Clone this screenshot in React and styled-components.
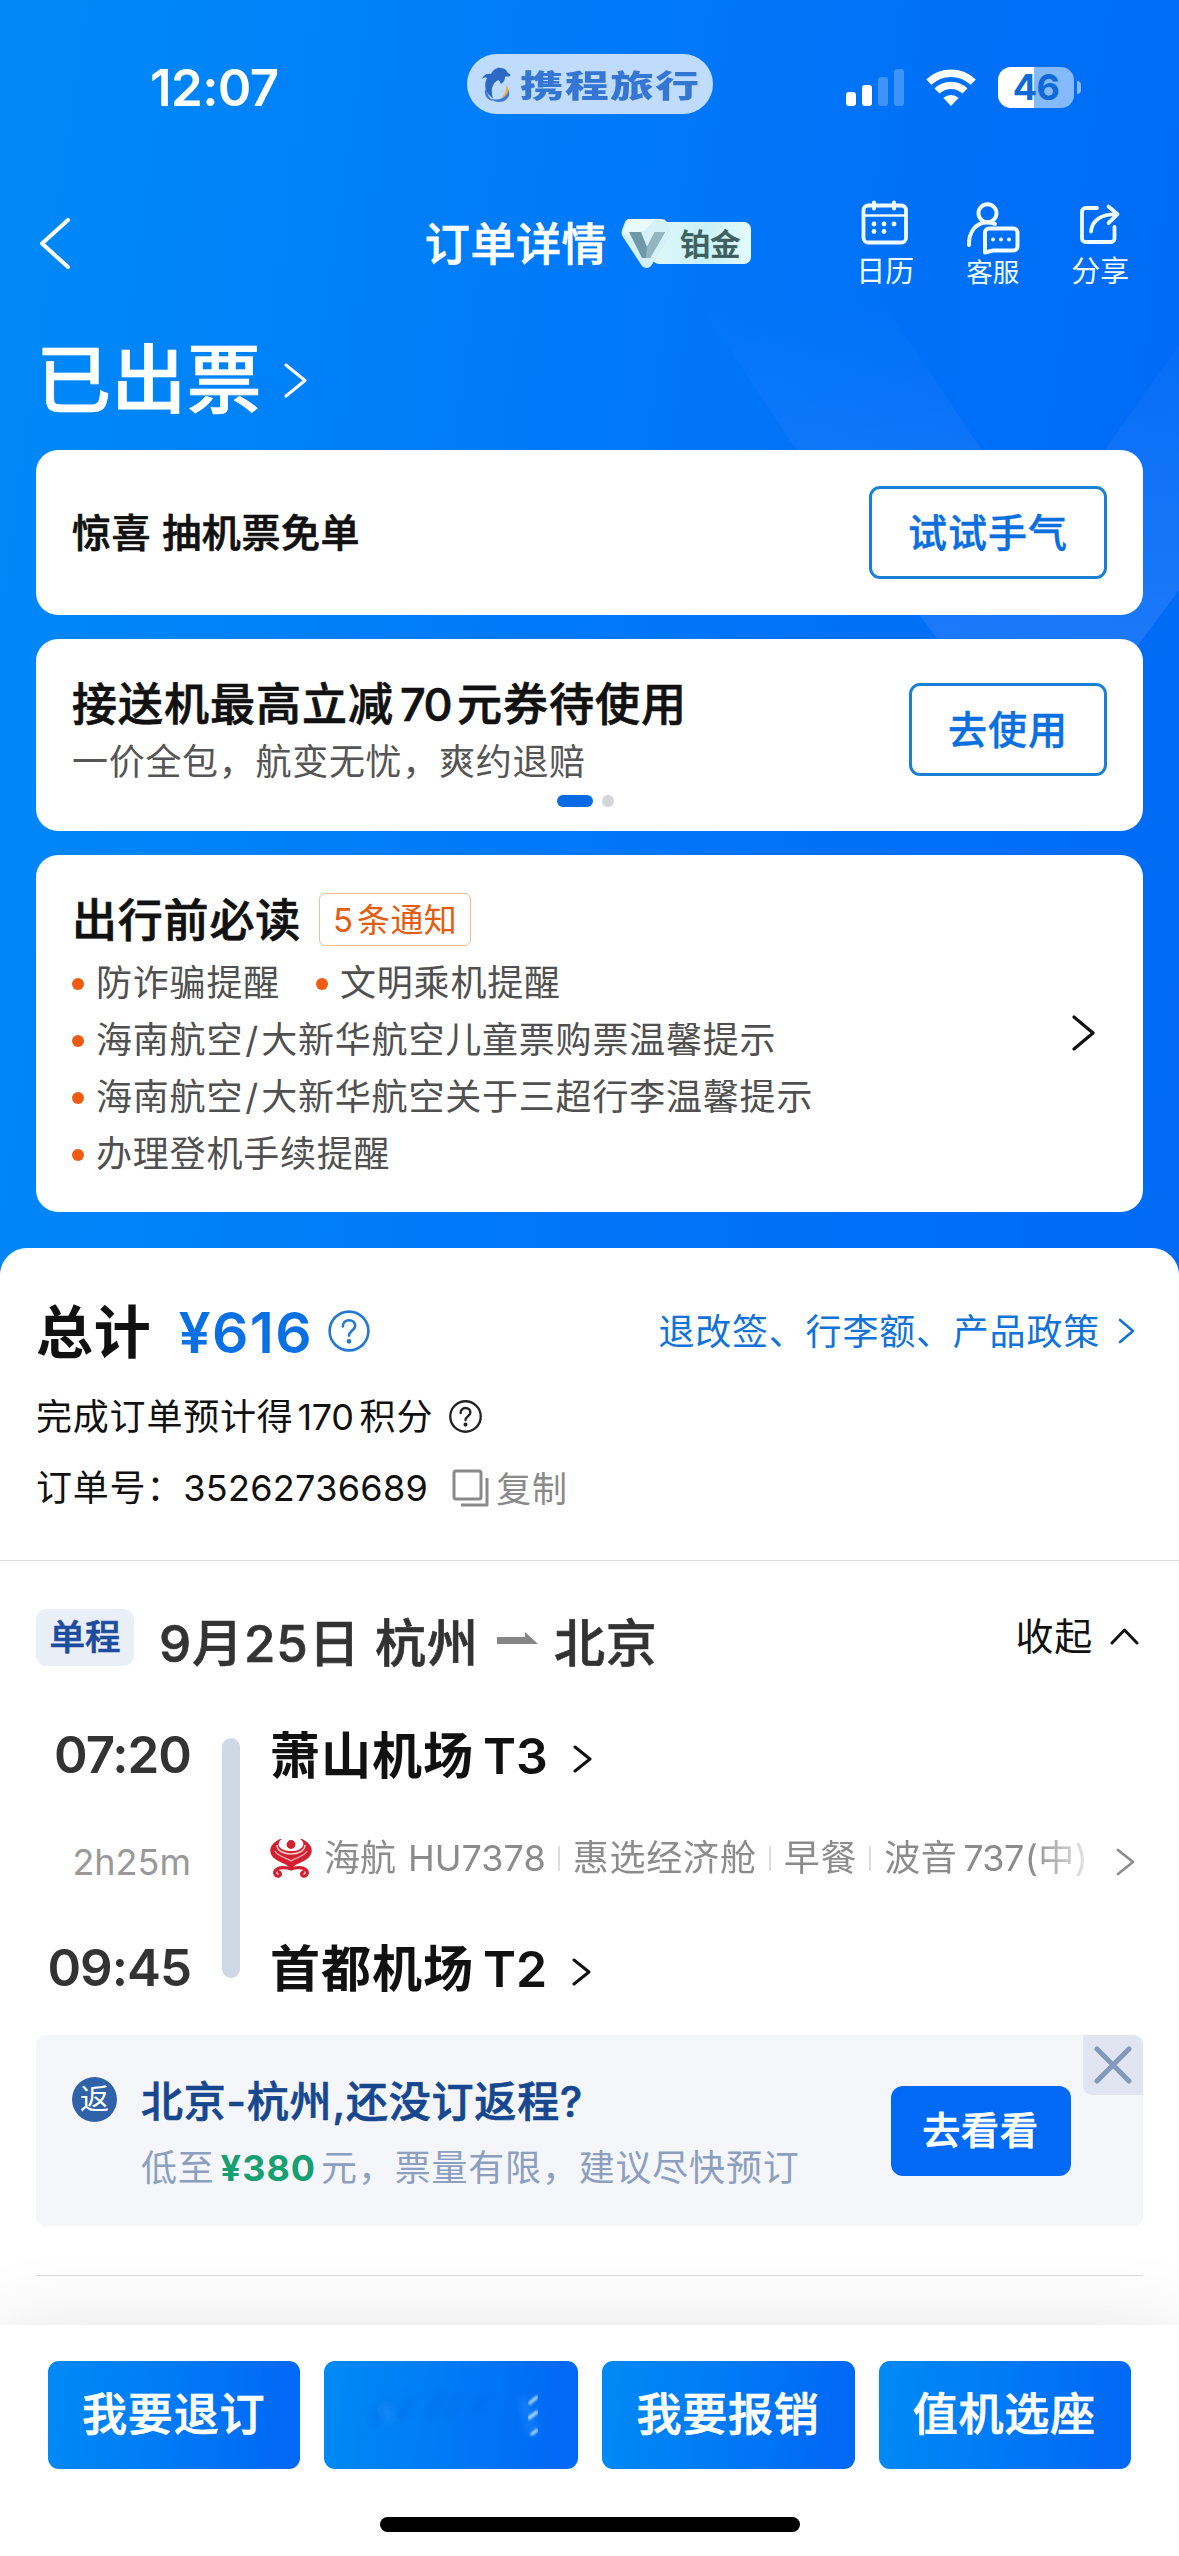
import React from "react";
import styled, { createGlobalStyle } from "styled-components";

const Global = createGlobalStyle`
  * { box-sizing: border-box; }
  html, body { margin: 0; padding: 0; background: #fff; }
  body { font-family: Inter, "Noto Sans CJK SC", sans-serif; -webkit-font-smoothing: antialiased; }
  svg { display: block; flex: none; }
`;

const Screen = styled.div`
  position: relative;
  width: 1179px;
  height: 2556px;
  display: flex;
  flex-direction: column;
  overflow: hidden;
  background: linear-gradient(98deg, #008af7 0%, #007bf8 42%, #006ff7 75%, #006af4 100%);
  background-size: 1179px 1300px;
`;

const Watermark = styled.svg`
  position: absolute;
  left: 679px;
  top: 280px;
`;

const Txt = styled.span`
  display: block;
  white-space: nowrap;
  padding-top: ${(p) => p.$drop || 0}px;
  font-size: ${(p) => p.$size || 36}px;
  line-height: ${(p) => p.$lh || 1.2};
  font-weight: ${(p) => p.$weight || 400};
  color: ${(p) => p.$color || "#111"};
  letter-spacing: ${(p) => (p.$track === undefined ? 0.8 : p.$track)}px;
  -webkit-text-stroke: ${(p) => (p.$weight === 500 ? "0.7px currentColor" : "0")};
`;

const Num = styled.span`
  margin: 0 ${(p) => (p.$r === undefined ? 6 : p.$r)}px 0 ${(p) => (p.$l === undefined ? 6 : p.$l)}px;
  letter-spacing: ${(p) => p.$track || 0}px;
  font-weight: ${(p) => p.$weight || "inherit"};
  color: ${(p) => p.$color || "inherit"};
`;

/* ---------- status bar ---------- */
const StatusBar = styled.header`
  position: relative;
  display: grid;
  grid-template-columns: 1fr auto 1fr;
  grid-template-rows: 60px;
  align-items: center;
  height: 114px;
  padding: 54px 98px 0 150px;
`;
const Clock = styled(Txt)`
  margin-top: 8px;
`;
const BrandPill = styled.div`
  display: flex;
  align-items: center;
  width: 246px;
  height: 60px;
  transform: translateX(-26px);
  padding-left: 14px;
  border-radius: 30px;
  background: #bfdcfc;
`;
const BrandName = styled.span`
  margin: 0 0 1px 7px;
  font: 900 31px/40px "Noto Sans CJK SC", sans-serif;
  letter-spacing: 1px;
  color: #3676d3;
  white-space: nowrap;
  transform: scaleX(1.41);
  transform-origin: left center;
`;
const StatusIcons = styled.div`
  display: flex;
  justify-content: flex-end;
  align-items: center;
  gap: 22px;
  margin-top: 7px;
`;
const Battery = styled.div`
  display: flex;
  align-items: center;
  gap: 3px;
`;
const BatteryBody = styled.div`
  display: flex;
  align-items: center;
  justify-content: center;
  width: 76px;
  height: 41px;
  border-radius: 13px;
  background: linear-gradient(90deg, #fff 0 36px, #84b9fb 36px);
  color: #0e6ad8;
  font-size: 36px;
  line-height: 41px;
  font-weight: 700;
  letter-spacing: -0.5px;
`;
const BatteryTip = styled.div`
  width: 4px;
  height: 13px;
  border-radius: 0 5px 5px 0;
  background: #84b9fb;
`;

/* ---------- navigation ---------- */
const NavBar = styled.nav`
  position: relative;
  display: grid;
  grid-template-columns: 1fr auto 1fr;
  align-items: center;
  height: 106px;
  margin-top: 76px;
  padding: 0 25px 0 40px;
`;
const NavTitle = styled.div`
  display: flex;
  align-items: center;
  transform: translateX(-9px);
`;
const Level = styled.div`
  display: flex;
  align-items: center;
  margin-left: 13px;
`;
const LevelLabel = styled.div`
  display: flex;
  align-items: center;
  justify-content: flex-end;
  width: 99px;
  height: 42px;
  margin-left: -20px;
  padding-right: 11px;
  border-radius: 7px;
  background: linear-gradient(90deg, #dff8fb, #c9f1f4 55%, #e4fcfb);
`;
const LevelShield = styled.svg`
  position: relative;
  z-index: 1;
`;
const Actions = styled.div`
  display: flex;
  justify-content: flex-end;
`;
const Action = styled.div`
  display: flex;
  flex-direction: column;
  align-items: center;
  width: 107.5px;
`;

/* ---------- hero ---------- */
const Hero = styled.div`
  position: relative;
  display: flex;
  align-items: center;
  height: 154px;
  padding: 14px 0 0 36px;
  gap: 22px;
`;
const Cards = styled.div`
  position: relative;
  display: flex;
  flex-direction: column;
  gap: 24px;
  padding: 0 36px 36px;
`;
const Card = styled.section`
  position: relative;
  display: flex;
  justify-content: space-between;
  align-items: center;
  height: ${(p) => p.$h}px;
  padding: 0 36px;
  border-radius: 22px;
  background: #fff;
`;
const OutlineButton = styled.button`
  width: ${(p) => p.$w}px;
  height: 93px;
  margin-bottom: ${(p) => p.$lift || 0}px;
  padding: 0;
  border: 3px solid #1b7fd6;
  border-radius: 11px;
  background: #fff;
  font: 500 39px/1 Inter, "Noto Sans CJK SC", sans-serif;
  letter-spacing: 1px;
  color: #0b6fdf;
  -webkit-text-stroke: 0.4px currentColor;
`;
const PromoText = styled.div`
  display: flex;
  flex-direction: column;
  align-self: flex-start;
  padding-top: 39px;
`;
const Pager = styled.div`
  position: absolute;
  left: 521px;
  bottom: 24px;
  display: flex;
  gap: 9px;
`;
const Dot = styled.i`
  width: ${(p) => (p.$on ? 36 : 12)}px;
  height: 12px;
  border-radius: 6px;
  background: ${(p) => (p.$on ? "#0a6ae4" : "#d3d5d8")};
`;
const Notices = styled.div`
  display: flex;
  flex-direction: column;
  align-self: flex-start;
  padding-top: 38px;
`;
const NoticeHead = styled.div`
  display: flex;
  align-items: center;
  gap: 18px;
  height: 53px;
  margin-bottom: 9px;
`;
const Tag = styled.div`
  display: flex;
  align-items: center;
  justify-content: center;
  width: 152px;
  height: 53px;
  border: 1.5px solid #f3bd92;
  border-radius: 6px;
`;
const NoticeRow = styled.div`
  display: flex;
  align-items: center;
  gap: 36px;
  height: 57px;
`;
const Notice = styled.div`
  display: flex;
  align-items: center;
  gap: 12px;
  &::before {
    content: "";
    width: 12px;
    height: 12px;
    border-radius: 50%;
    background: #ee5b12;
  }
`;
const CardChevron = styled.div`
  margin: -1px 12px 0 0;
`;

/* ---------- sheet ---------- */
const Sheet = styled.main`
  position: relative;
  flex: 1;
  border-radius: 27px 27px 0 0;
  background: #fff;
`;
const Summary = styled.section`
  height: 312px;
  padding: 53px 44px 0 36px;
`;
const SummaryRow = styled.div`
  display: flex;
  align-items: center;
  height: ${(p) => p.$h}px;
  margin-bottom: ${(p) => p.$mb || 0}px;
  gap: ${(p) => p.$gap || 0}px;
`;
const PolicyLink = styled.a`
  display: flex;
  align-items: center;
  gap: 18px;
  margin-left: auto;
`;
const Copy = styled.div`
  display: flex;
  align-items: center;
  gap: 6px;
`;
const Rule = styled.hr`
  height: 1px;
  margin: ${(p) => p.$m || 0};
  border: 0;
  background: #dcdde0;
`;
const Trip = styled.section`
  padding: 48px 36px 0;
`;
const TripHead = styled.div`
  display: flex;
  align-items: center;
  height: 57px;
`;
const TripTag = styled.div`
  display: flex;
  align-items: center;
  justify-content: center;
  width: 98px;
  height: 57px;
  border-radius: 11px;
  background: #eaeef7;
`;
const Route = styled.div`
  display: flex;
  align-items: center;
  margin: 13px 0 0 25px;
`;
const Arrow = styled.svg`
  margin: -11px 16px 0 18px;
`;
const Collapse = styled.div`
  display: flex;
  align-items: center;
  gap: 17px;
  margin: -2px 4px 0 auto;
`;
const Itinerary = styled.div`
  display: grid;
  grid-template-columns: 154px 18px 1fr;
  height: 265px;
  margin-top: 63px;
`;
const Column = styled.div`
  display: flex;
  flex-direction: column;
  justify-content: space-between;
  align-items: ${(p) => p.$align};
  padding-left: ${(p) => p.$pl || 0}px;
`;
const TimeLine = styled.div`
  width: 18px;
  height: 240px;
  margin: 9px 0 auto;
  border-radius: 9px;
  background: #ced8e6;
`;
const Place = styled.div`
  display: flex;
  align-items: center;
  height: 52px;
  gap: 25px;
  & > svg { margin-top: 8px; }
`;
const FlightRow = styled.div`
  display: flex;
  align-items: center;
  width: 873px;
  height: 48px;
  margin-bottom: 7px;
`;
const FlightInfo = styled.div`
  display: flex;
  align-items: center;
  width: 822px;
  -webkit-mask-image: linear-gradient(90deg, #000 760px, rgba(0, 0, 0, 0.2) 818px);
  mask-image: linear-gradient(90deg, #000 760px, rgba(0, 0, 0, 0.2) 818px);
`;
const Carrier = styled(Txt)`
  margin-left: 12px;
`;
const Sep = styled.i`
  width: 2px;
  height: 25px;
  margin: 0 13px 0 12px;
  background: #dcdde0;
`;
const RowChevron = styled.div`
  margin: 7px 0 0 24px;
`;
const TimeText = styled(Txt)`
  height: 52px;
  line-height: 52px;
  margin-right: -1px;
`;

/* ---------- return offer ---------- */
const Offer = styled.section`
  position: relative;
  display: flex;
  height: 191px;
  margin-top: 41px;
  padding: 0 72px 0 36px;
  border-radius: 9px;
  background: #f4f6fa;
`;
const Back = styled.div`
  display: flex;
  align-items: center;
  justify-content: center;
  width: 45px;
  height: 45px;
  margin-top: 42px;
  border-radius: 50%;
  background: #2f62a8;
`;
const OfferText = styled.div`
  display: flex;
  flex-direction: column;
  padding: 40px 0 0 24px;
`;
const SolidButton = styled.button`
  width: 180px;
  height: 90px;
  margin: 51px 0 0 auto;
  padding: 0 1px 2px 0;
  border: 0;
  border-radius: 12px;
  background: #006af6;
  color: #fff;
  font: 500 38px/1 Inter, "Noto Sans CJK SC", sans-serif;
  letter-spacing: 0.8px;
  -webkit-text-stroke: 0.7px currentColor;
`;
const Close = styled.div`
  position: absolute;
  right: 0;
  top: 0;
  display: flex;
  align-items: center;
  justify-content: center;
  width: 60px;
  height: 60px;
  border-radius: 0 9px 0 9px;
  background: #e0e5f1;
`;

/* ---------- bottom bar ---------- */
const BottomBar = styled.footer`
  position: relative;
  height: 231px;
  padding-top: 36px;
  background: #fff;
  box-shadow: 0 0 75px rgba(0, 0, 0, 0.1);
`;
const Buttons = styled.div`
  display: grid;
  grid-template-columns: repeat(4, 1fr);
  gap: 24px;
  padding: 0 48px;
`;
const MainButton = styled.button`
  display: flex;
  align-items: center;
  justify-content: center;
  height: 108px;
  padding: 0 1px 1px 0;
  border: 0;
  border-radius: 11px;
  background: linear-gradient(97deg, #008af4 0%, #007af6 50%, #0069f5 90%);
  color: #fff;
  font: 500 45px/1 Inter, "Noto Sans CJK SC", sans-serif;
  letter-spacing: 0.8px;
  -webkit-text-stroke: 0.7px currentColor;
`;
const HomeIndicator = styled.div`
  width: 420px;
  height: 15px;
  margin: 48px auto 0;
  border-radius: 8px;
  background: #000;
`;

const Chevron = ({ w, h, dir = "right", color = "#111", sw = 3 }) => {
  const d = {
    right: `M2 2L${w - 2} ${h / 2}L2 ${h - 2}`,
    left: `M${w - 2} 2L2 ${h / 2}L${w - 2} ${h - 2}`,
    up: `M2 ${h - 2}L${w / 2} 2L${w - 2} ${h - 2}`,
  }[dir];
  return (
    <svg width={w} height={h} fill="none" stroke={color} strokeWidth={sw} strokeLinecap="round" strokeLinejoin="round">
      <path d={d} />
    </svg>
  );
};

const Help = ({ size, color, sw }) => (
  <svg width={size} height={size} viewBox="0 0 42 42" fill="none" stroke={color} strokeWidth={sw} strokeLinecap="round">
    <circle cx="21" cy="21" r="19.4" />
    <path d="M14.8 16.5c0-3.8 2.6-6.3 6.2-6.3s6.2 2.3 6.2 5.6c0 4.4-6.2 5-6.2 9.8" />
    <circle cx="21" cy="31.3" r="1.1" fill={color} />
  </svg>
);

const Dolphin = () => (
  <svg width="32" height="37" viewBox="0 0 32 37">
    <path d="M1 13C2 9 6 7 10 8c2-4 6-7 10-6 4 0 6 3 7 5 2 1 3 2 2 3-2 1-4 0-5 1 0 3-1 5-4 7-1-2-1-3-3-4-5 3-8 9-5 18-7-4-10-12-6-20-2-1-4 0-5 1Z" fill="#2c68c6" />
    <path d="M4 24c-1 7 4 11 9 11-4-2-7-6-7-12Z" fill="#3d7bd8" />
    <path d="M9 32c8 4 17 0 18-9 4 7-2 13-9 13-4 0-7-2-9-4Z" fill="#3d7bd8" />
    <path d="M25 19c5 5 1 12-5 13 4-3 6-8 5-13Z" fill="#f3a83b" />
  </svg>
);

const Signal = () => (
  <svg width="58" height="37" fill="#fff">
    <rect x="0" y="23" width="10" height="14" rx="3" />
    <rect x="16" y="16" width="10" height="21" rx="3" />
    <rect x="32" y="8" width="10" height="29" rx="3" opacity=".24" />
    <rect x="48" y="0" width="10" height="37" rx="3" opacity=".24" />
  </svg>
);

const Wifi = () => (
  <svg width="50" height="37" viewBox="0 0 50 37" fill="none" stroke="#fff">
    <path d="M2.8 13.2a32 32 0 0 1 44.4 0" strokeWidth="7.4" />
    <path d="M11 22a20 20 0 0 1 28 0" strokeWidth="7.2" />
    <path d="M25 37l-7.6-8a11 11 0 0 1 15.2 0Z" fill="#fff" stroke="none" />
  </svg>
);

const CalendarIcon = () => (
  <svg width="60" height="58" fill="none" stroke="#effbff" strokeWidth="3.8" strokeLinecap="round">
    <rect x="8.5" y="7.5" width="42.5" height="37" rx="4.5" />
    <path d="M9 17.5h42" strokeWidth="2.6" />
    <path d="M19 4.5v6M39 4.5v6" strokeWidth="4" />
    <g fill="#effbff" stroke="none">
      <circle cx="19" cy="26" r="2.4" />
      <circle cx="29" cy="26" r="2.4" />
      <circle cx="39" cy="26" r="2.4" />
      <circle cx="19" cy="33.5" r="2.4" />
      <circle cx="29" cy="33.5" r="2.4" />
    </g>
  </svg>
);

const ServiceIcon = () => (
  <svg width="60" height="58" fill="none" stroke="#effbff" strokeWidth="4" strokeLinecap="round" strokeLinejoin="round">
    <circle cx="24.5" cy="15.3" r="9" />
    <path d="M6 47c-.5-13 7-22.5 18-22.5 3 0 5.5.3 8 1.5" />
    <path d="M25.5 30.5h25a4 4 0 0 1 4 4v14a4 4 0 0 1-4 4H30l-8 2V34.5a4 4 0 0 1 3.500-4Z" />
    <g fill="#effbff" stroke="none">
      <circle cx="30" cy="41.5" r="2" />
      <circle cx="38" cy="41.5" r="2" />
      <circle cx="46" cy="41.5" r="2" />
    </g>
  </svg>
);

const ShareIcon = () => (
  <svg width="60" height="58" fill="none" stroke="#effbff" strokeWidth="3.8" strokeLinecap="round" strokeLinejoin="round">
    <path d="M27 10H15.5a3.5 3.5 0 0 0-3.5 3.5v27a3.5 3.5 0 0 0 3.5 3.500H41a3.5 3.5 0 0 0 3.5-3.5V29" />
    <path d="M21 33.5c1-9.5 8-17 25.5-17.3M38.5 8.500l9 7.700-9 9" />
  </svg>
);

const Hainan = () => (
  <svg width="42" height="40" viewBox="0 0 42 40" fill="none">
    <path d="M10 1C1 5-2 12 2 18c4 6 13 6 19 13 6-7 15-7 19-13 4-6 1-13-8-17Z" fill="#d2202f" />
    <path d="M12 1C7 4 8 9 12 11c3 2 6 2 9 2s6 0 9-2c4-2 5-7 0-10Z" fill="#fff" />
    <circle cx="21" cy="6.500" r="4.400" fill="#d2202f" />
    <path d="M7 7c0 6 7 9 14 9s14-3 14-9" stroke="#f6c9cc" strokeWidth="1.500" />
    <path d="M5 13c3 6 11 6 16 10 5-4 13-4 16-10" stroke="#f0aab0" strokeWidth="1.300" />
    <path d="M21 31c-5-2-12-2-15 1-3 3 0 7 3 6 2-1 2-3 0-4M21 31c5-2 12-2 15 1 3 3 0 7-3 6-2-1-2-3 0-4" stroke="#d2202f" strokeWidth="3.200" strokeLinecap="round" />
  </svg>
);

const Smudge = () => (
  <svg width="253" height="108" viewBox="0 0 253 108">
    <defs>
      <filter id="soft" x="-30%" y="-30%" width="160%" height="160%">
        <feGaussianBlur stdDeviation="5" />
      </filter>
      <filter id="edge">
        <feGaussianBlur stdDeviation="1" />
      </filter>
    </defs>
    <g filter="url(#soft)" fill="none" strokeLinecap="round">
      <path d="M50 62l12-24M74 58l14-18M106 54l12-20M126 56l8-20M150 50l12-14" stroke="#0068e6" strokeWidth="8" opacity=".5" />
      <path d="M60 46l6 12M200 40l8 30" stroke="#2d96ff" strokeWidth="8" opacity=".5" />
    </g>
    <path d="M206 42l7-6M205 57l8-6M208 73l5-4" stroke="#cfe9ff" strokeWidth="3.500" strokeLinecap="round" opacity=".8" filter="url(#edge)" />
  </svg>
);

const notices = [
  ["防诈骗提醒", "文明乘机提醒"],
  ["海南航空/大新华航空儿童票购票温馨提示"],
  ["海南航空/大新华航空关于三超行李温馨提示"],
  ["办理登机手续提醒"],
];

const NoticeText = ({ text }) => {
  const [head, tail] = text.split("/");
  return (
    <Txt $color="#505050">
      {head}
      {tail && (
        <>
          <Num $l={2} $r={3}>/</Num>
          {tail}
        </>
      )}
    </Txt>
  );
};

export default function App() {
  return (
    <Screen>
      <Global />
      <Watermark width="500" height="420" viewBox="679 280 500 420">
        <defs>
          <linearGradient id="fade" x1="0" y1="0" x2="0" y2="1">
            <stop offset="0" stopColor="#4a8cff" stopOpacity="0" />
            <stop offset=".4" stopColor="#4a8cff" stopOpacity=".2" />
            <stop offset="1" stopColor="#4a8cff" stopOpacity=".42" />
          </linearGradient>
        </defs>
        <path d="M700 305H885L975 440L1045 535L1179 345V590L1105 690H975L790 440Z" fill="url(#fade)" />
      </Watermark>

      <StatusBar>
        <Clock $size={51} $weight={600} $color="#fff" $track={-0.6} $lh="52px">12:07</Clock>
        <BrandPill>
          <Dolphin />
          <BrandName>携程旅行</BrandName>
        </BrandPill>
        <StatusIcons>
          <Signal />
          <Wifi />
          <Battery>
            <BatteryBody>46</BatteryBody>
            <BatteryTip />
          </Battery>
        </StatusIcons>
      </StatusBar>

      <NavBar>
        <Chevron w={30} h={51} dir="left" color="#fff" sw={4} />
        <NavTitle>
          <Txt $size={45} $weight={500} $color="#fff" $track={0.6} $drop={3}>订单详情</Txt>
          <Level>
            <LevelShield width="52" height="52" viewBox="0 0 52 52">
              <path d="M8 2h34a6 6 0 0 1 5 3l3 9a8 8 0 0 1-1 7L31 49a6 6 0 0 1-9 0L3 20a8 8 0 0 1-1-7L5 5a5 5 0 0 1 3-3Z" fill="#d3f1f6" />
              <path d="M8 2h28L24 14l-20 4-1-2Z" fill="#eefcfd" opacity=".8" />
              <path d="M9 15h12l6 15 8-15h10L30 41h-8Z" fill="#7099a8" />
              <path d="M27 30l8-15h10L30 41h-4Z" fill="#93b6c1" />
            </LevelShield>
            <LevelLabel>
              <Txt $size={30} $weight={500} $color="#3e5f60" $track={0} $drop={1}>铂金</Txt>
            </LevelLabel>
          </Level>
        </NavTitle>
        <Actions>
          <Action>
            <CalendarIcon />
            <Txt $size={29} $color="#effbff" $track={0} $lh="32px">日历</Txt>
          </Action>
          <Action>
            <ServiceIcon />
            <Txt $size={26.5} $color="#effbff" $track={0} $lh="33px">客服</Txt>
          </Action>
          <Action>
            <ShareIcon />
            <Txt $size={29} $color="#effbff" $track={0} $lh="32px">分享</Txt>
          </Action>
        </Actions>
      </NavBar>

      <Hero>
        <Txt $size={75} $weight={500} $color="#fff" $track={0.3}>已出票</Txt>
        <Chevron w={23} h={35} color="#fff" />
      </Hero>

      <Cards>
        <Card $h={165}>
          <Txt $size={39} $weight={500} $track={0.6} $drop={2}>惊喜 抽机票免单</Txt>
          <OutlineButton $w={238}>试试手气</OutlineButton>
        </Card>

        <Card $h={192}>
          <PromoText>
            <Txt $size={45} $weight={500} $track={1} $lh="54px">接送机最高立减<Num $track={-1.5}>70</Num>元券待使用</Txt>
            <Txt $color="#555" $lh="60px" $track={0.7}>一价全包，航变无忧，爽约退赔</Txt>
          </PromoText>
          <OutlineButton $w={198} $lift={11}>去使用</OutlineButton>
          <Pager>
            <Dot $on />
            <Dot />
          </Pager>
        </Card>

        <Card $h={357}>
          <Notices>
            <NoticeHead>
              <Txt $size={45} $weight={500} $track={0.8} $drop={2}>出行前必读</Txt>
              <Tag>
                <Txt $size={33} $color="#e35c11" $track={0.3} $drop={2}><Num $l={0} $r={4}>5</Num>条通知</Txt>
              </Tag>
            </NoticeHead>
            {notices.map((row) => (
              <NoticeRow key={row[0]}>
                {row.map((n) => (
                  <Notice key={n}>
                    <NoticeText text={n} />
                  </Notice>
                ))}
              </NoticeRow>
            ))}
          </Notices>
          <CardChevron>
            <Chevron w={23} h={36} sw={3.2} />
          </CardChevron>
        </Card>
      </Cards>

      <Sheet>
        <Summary>
          <SummaryRow $h={60} $mb={33}>
            <Txt $size={57} $weight={600} $drop={4}>总计</Txt>
            <Num $l={27} $r={15}>
              <Txt as="span" $size={57} $weight={600} $color="#0b70e3" $track={1.3} $drop={4}>¥616</Txt>
            </Num>
            <Help size={42} color="#2478d0" sw={2.6} />
            <PolicyLink>
              <Txt $color="#1173d8" $drop={4}>退改签、行李额、产品政策</Txt>
              <Chevron w={17} h={26} color="#1173d8" sw={2.6} />
            </PolicyLink>
          </SummaryRow>
          <SummaryRow $h={44} $mb={28} $gap={16}>
            <Txt $drop={3}>完成订单预计得<Num $track={-0.4} $l={4}>170</Num>积分</Txt>
            <Help size={33} color="#222" sw={3} />
          </SummaryRow>
          <SummaryRow $h={44}>
            <Txt $drop={2}>订单号：<Num $l={0} $r={24} $track={0.3}>35262736689</Num></Txt>
            <Copy>
              <svg width="38" height="38" fill="none" stroke="#8a8a8a" strokeWidth="3">
                <rect x="2" y="2" width="27" height="28" rx="2" />
                <path d="M35 9v27H9" strokeLinejoin="round" />
              </svg>
              <Txt $size={35} $color="#8a8a8a" $drop={2}>复制</Txt>
            </Copy>
          </SummaryRow>
        </Summary>
        <Rule />

        <Trip>
          <TripHead>
            <TripTag>
              <Txt $size={35.5} $weight={500} $color="#1b4c9d" $track={0} $drop={2}>单程</Txt>
            </TripTag>
            <Route>
              <Txt $size={51} $weight={500} $color="#333" $track={0.9}>9月25日 杭州</Txt>
              <Arrow width="41" height="13" viewBox="0 0 41 13">
                <path d="M0 5h28V0l13 12H0Z" fill="#868686" />
              </Arrow>
              <Txt $size={51} $weight={500} $color="#333" $track={0.8}>北京</Txt>
            </Route>
            <Collapse>
              <Txt $size={38}>收起</Txt>
              <Chevron w={29} h={17} dir="up" />
            </Collapse>
          </TripHead>

          <Itinerary>
            <Column $align="flex-end">
              <TimeText $size={51} $weight={600} $color="#333" $track={-1}>07:20</TimeText>
              <TimeText $size={36} $color="#999" $track={0}>2h25m</TimeText>
              <TimeText $size={51} $weight={600} $color="#333" $track={-1}>09:45</TimeText>
            </Column>
            <Column $pl={32}>
              <TimeLine />
            </Column>
            <Column $align="flex-start" $pl={62}>
              <Place>
                <Txt $size={50} $weight={600} $track={1} $drop={1}>萧山机场<Num $l={9} $r={0}>T3</Num></Txt>
                <Chevron w={19} h={28} />
              </Place>
              <FlightRow>
                <FlightInfo>
                  <Hainan />
                  <Carrier $color="#8c8c8c" $track={0} $drop={1}>海航<Num $l={12} $r={0} $track={0}>HU7378</Num></Carrier>
                  <Sep />
                  <Txt $color="#8c8c8c" $drop={1}>惠选经济舱</Txt>
                  <Sep />
                  <Txt $color="#8c8c8c" $drop={1}>早餐</Txt>
                  <Sep />
                  <Txt $color="#8c8c8c" $track={0.4} $drop={1}>波音<Num $l={6} $r={1} $track={-0.6}>737</Num>(中)</Txt>
                </FlightInfo>
                <RowChevron>
                  <Chevron w={19} h={28} color="#8c8c8c" sw={2.6} />
                </RowChevron>
              </FlightRow>
              <Place>
                <Txt $size={50} $weight={600} $track={1} $drop={1}>首都机场<Num $l={9} $r={0}>T2</Num></Txt>
                <Chevron w={19} h={28} />
              </Place>
            </Column>
          </Itinerary>

          <Offer>
            <Back>
              <Txt $size={29} $color="#fff" $track={0} $drop={1}>返</Txt>
            </Back>
            <OfferText>
              <Txt $size={42} $weight={500} $color="#17488f" $track={0.8} $lh="54px">北京-杭州,还没订返程?</Txt>
              <Txt $color="#8c9fbf" $lh="78px">低至<Num $l={6} $r={5} $weight={700} $color="#16a072" $track={1}>¥380</Num>元，票量有限，建议尽快预订</Txt>
            </OfferText>
            <SolidButton>去看看</SolidButton>
            <Close>
              <svg width="38" height="38" stroke="#8299bc" strokeWidth="5" strokeLinecap="round">
                <path d="M3 3L35 35M35 3L3 35" />
              </svg>
            </Close>
          </Offer>
          <Rule $m="49px 0 0" />
        </Trip>
      </Sheet>

      <BottomBar>
        <Buttons>
          <MainButton>我要退订</MainButton>
          <MainButton>
            <Smudge />
          </MainButton>
          <MainButton>我要报销</MainButton>
          <MainButton>值机选座</MainButton>
        </Buttons>
        <HomeIndicator />
      </BottomBar>
    </Screen>
  );
}
